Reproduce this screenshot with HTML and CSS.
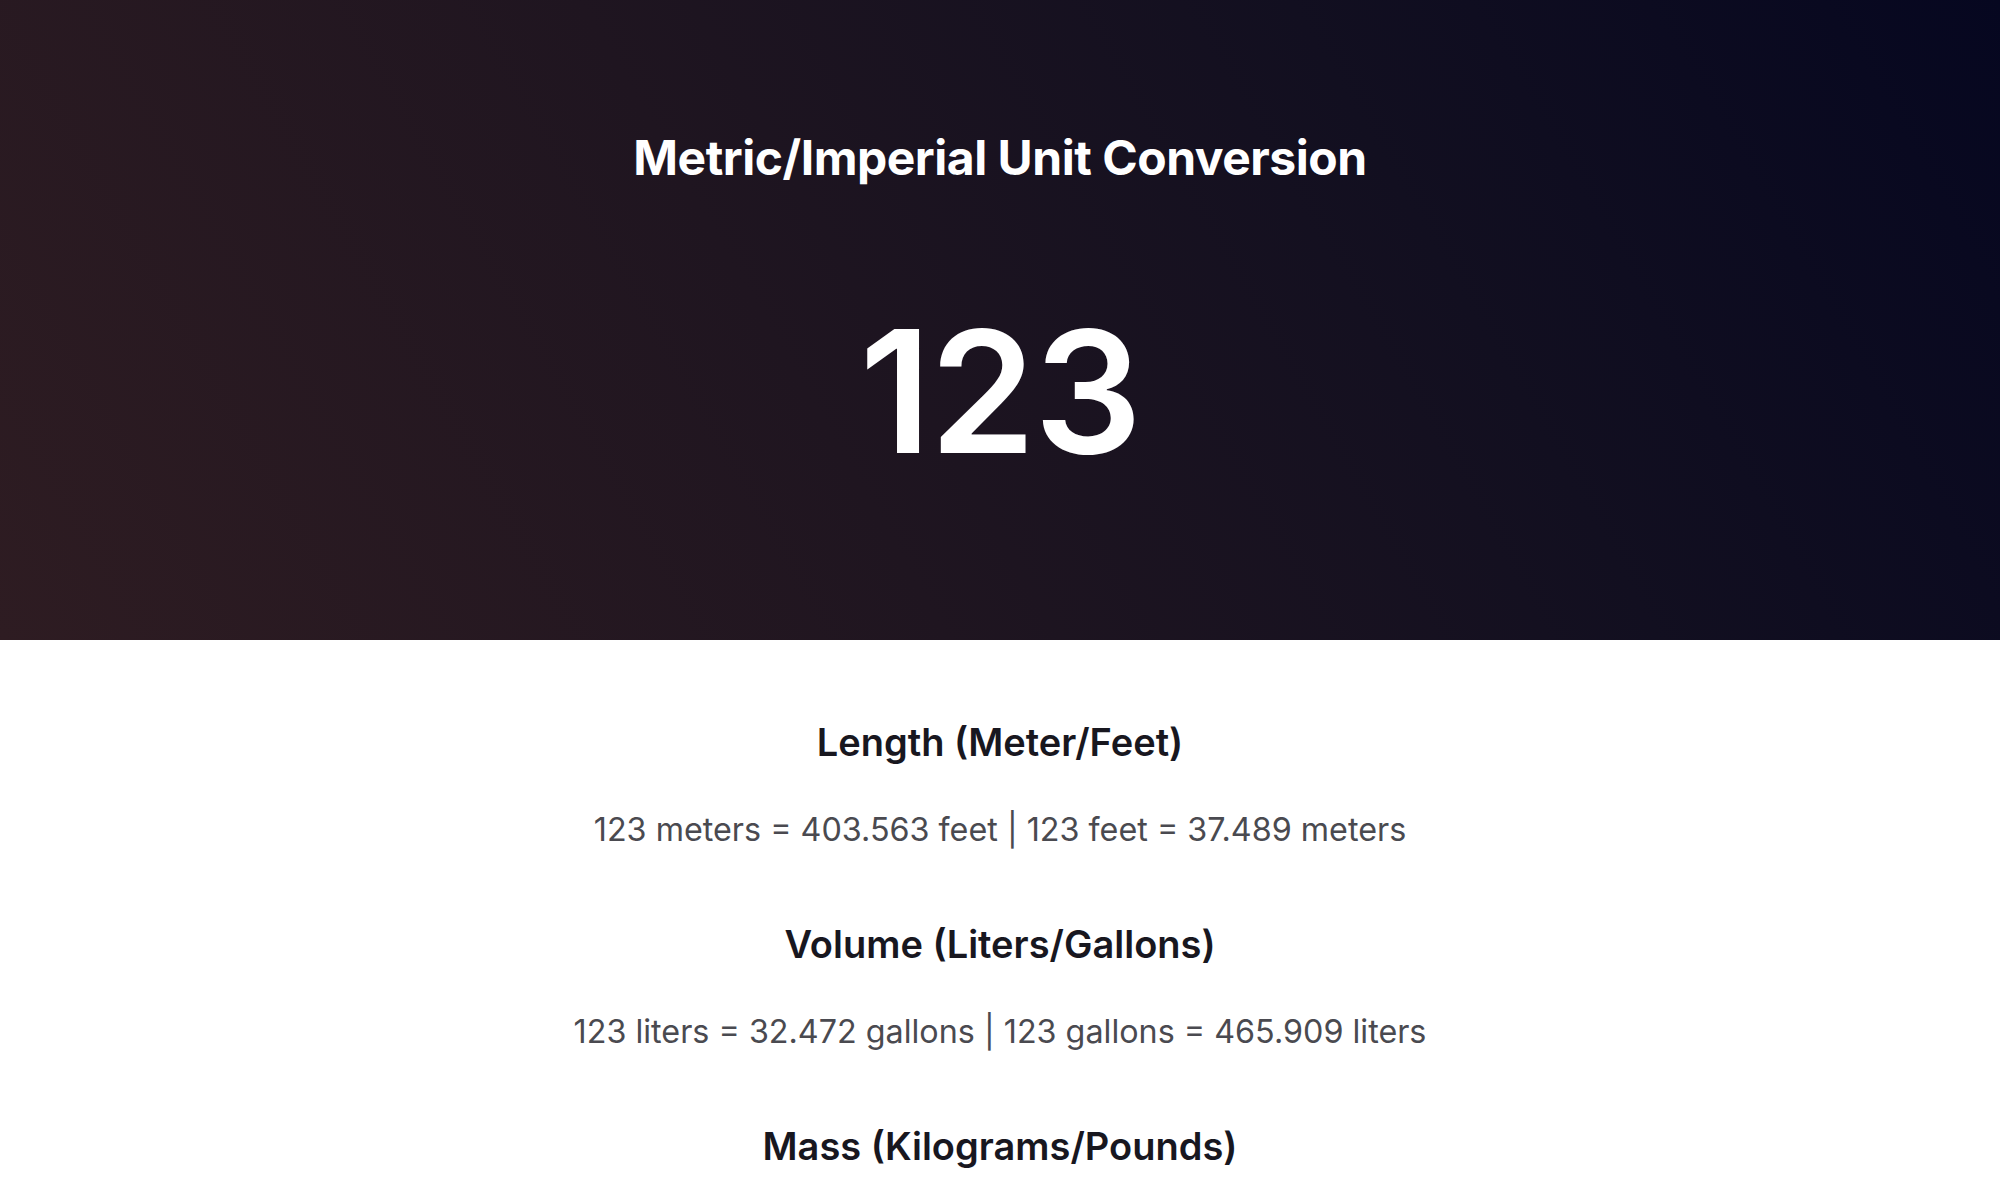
FILE: index.html
```html
<!DOCTYPE html>
<html lang="en">
<head>
<meta charset="utf-8">
<title>Metric/Imperial Unit Conversion</title>
<link rel="stylesheet" href="styles.css">
</head>
<body>
<header class="hero">
  <h1 class="hero-title">Metric/Imperial Unit Conversion</h1>
  <div class="hero-number">123</div>
</header>
<main class="results">
  <section class="conv">
    <h2 class="conv-title">Length (Meter/Feet)</h2>
    <p class="conv-text">123 meters = 403.563 feet | 123 feet = 37.489 meters</p>
  </section>
  <section class="conv">
    <h2 class="conv-title">Volume (Liters/Gallons)</h2>
    <p class="conv-text">123 liters = 32.472 gallons | 123 gallons = 465.909 liters</p>
  </section>
  <section class="conv">
    <h2 class="conv-title">Mass (Kilograms/Pounds)</h2>
    <p class="conv-text">123 kilos = 271.168 pounds | 123 pounds = 55.792 kilos</p>
  </section>
</main>
</body>
</html>
```
FILE: styles.css
```css
html, body {
  margin: 0;
  padding: 0;
}
body {
  font-family: Inter, "Noto Sans", sans-serif;
  background: #ffffff;
  color: #18171f;
}
.hero {
  height: 640px;
  box-sizing: border-box;
  display: flex;
  flex-direction: column;
  align-items: center;
  padding-top: 128px;
  background: linear-gradient(60deg, #2e1c22 0%, #1f1520 40%, #120f20 70%, #060720 100%);
  color: #ffffff;
}
.hero-title {
  margin: 0;
  font-size: 48px;
  font-weight: 700;
  letter-spacing: -0.01em;
  line-height: 60px;
}
.hero-number {
  margin-top: 103px;
  font-size: 170px;
  font-weight: 600;
  line-height: 200px;
  letter-spacing: -0.01em;
}
.results {
  display: flex;
  flex-direction: column;
  align-items: center;
  padding-top: 78px;
  gap: 68px;
}
.conv {
  display: flex;
  flex-direction: column;
  align-items: center;
}
.conv-title {
  margin: 0;
  font-size: 38px;
  font-weight: 600;
  line-height: 48px;
  color: #18171f;
}
.conv-text {
  margin: 42px 0 0;
  font-size: 32.3px;
  font-weight: 400;
  line-height: 44px;
  color: #4a4a50;
}
```
